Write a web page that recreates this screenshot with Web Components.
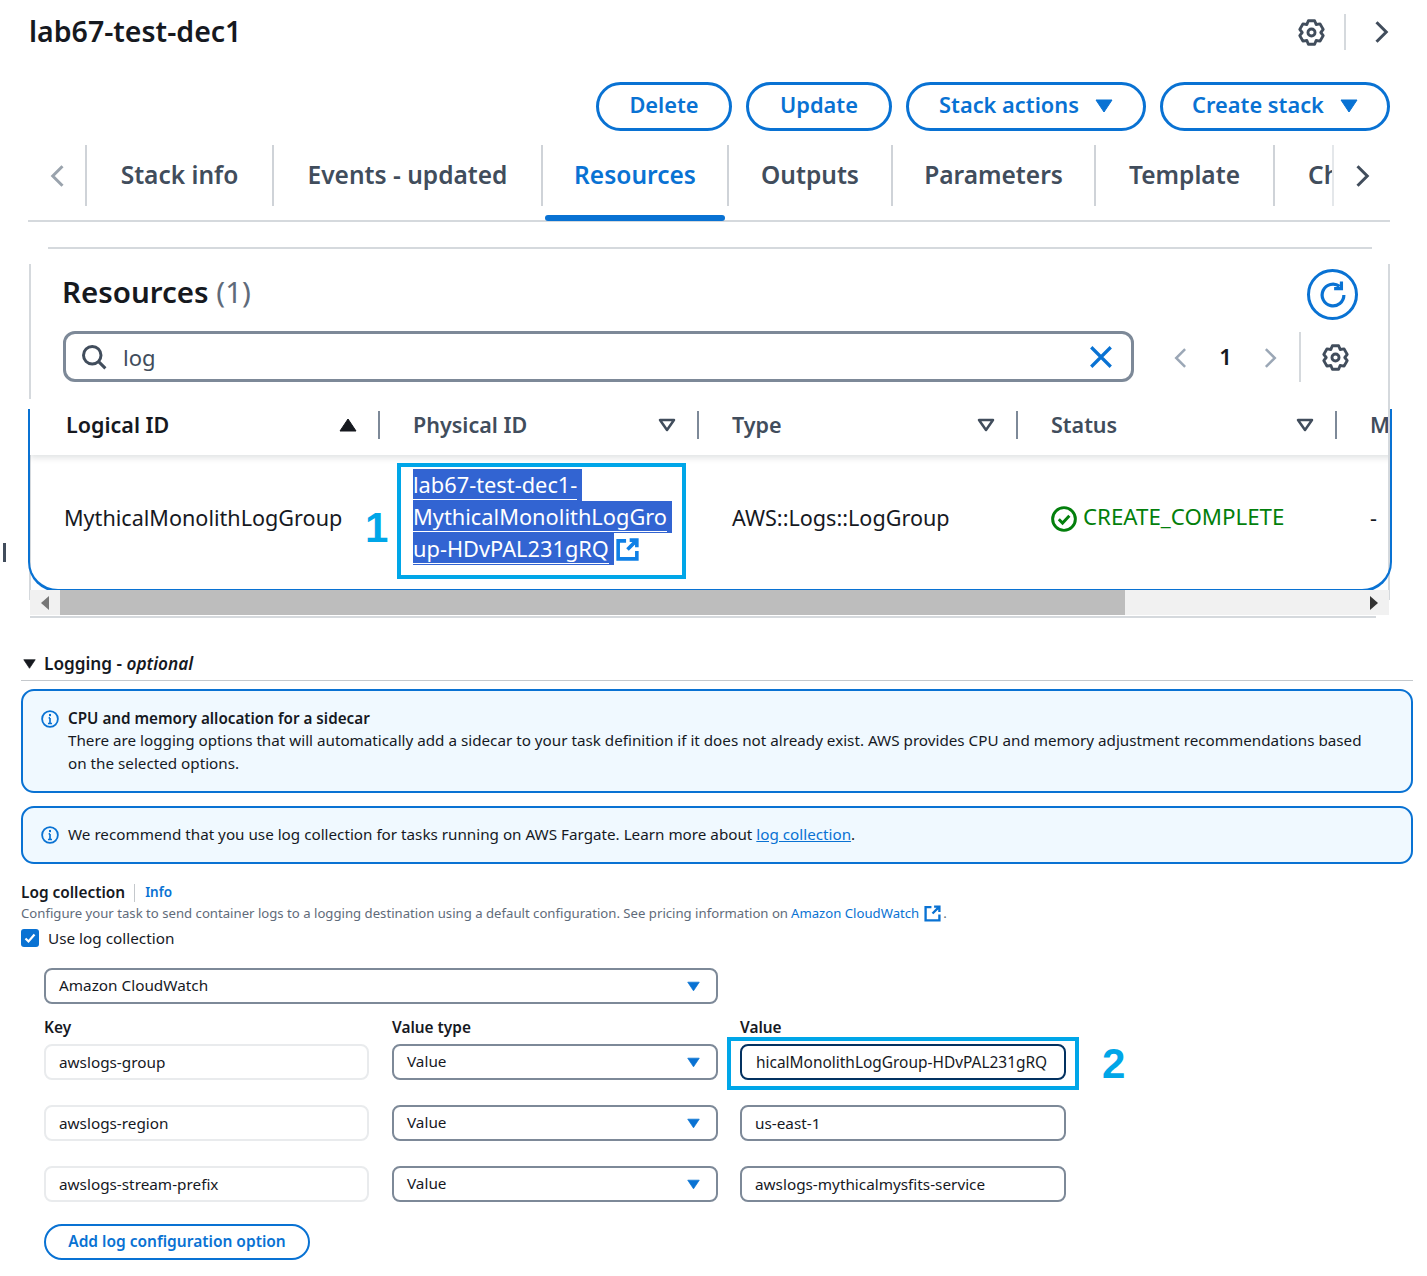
<!DOCTYPE html>
<html><head><meta charset="utf-8"><style>
html,body{margin:0;padding:0;background:#fff;font-family:"Noto Sans","Open Sans",sans-serif;color:#16191f}
</style></head><body>
<aws-page></aws-page>
<script>
function gearPath(){let d='';for(let k=0;k<6;k++){const a=-90+60*k;const pts=[[a-15,7.2],[a+15,7.2],[a+30,5.5]];
 for(const [t,r] of pts){const x=(8+r*Math.cos(t*Math.PI/180)).toFixed(2),y=(8+r*Math.sin(t*Math.PI/180)).toFixed(2);d+=(d?'L':'M')+x+' '+y;}}return d+'z';}
const I={
gear:s=>`<svg width="${s}" height="${s}" viewBox="0 0 16 16" fill="none" stroke="#414d5c" stroke-width="1.7" stroke-linejoin="round"><path d="${gearPath()}"/><circle cx="8" cy="8" r="2.1"/></svg>`,
right:(s,c='#414d5c',w=2)=>`<svg width="${s}" height="${s}" viewBox="0 0 16 16" fill="none" stroke="${c}" stroke-width="${w}"><path d="M5 1.5 11.5 8 5 14.5"/></svg>`,
left:(s,c='#8d99a8',w=2)=>`<svg width="${s}" height="${s}" viewBox="0 0 16 16" fill="none" stroke="${c}" stroke-width="${w}"><path d="M11 1.5 4.5 8 11 14.5"/></svg>`,
caret:(w=18,h=14,c='#0972d3')=>`<svg width="${w}" height="${h}" viewBox="0 0 18 14"><path d="M1 1h16L9 13z" fill="${c}" stroke="${c}" stroke-linejoin="round"/></svg>`,
info:`<svg width="18" height="18" viewBox="0 0 16 16" fill="none" stroke="#0972d3" stroke-width="1.6"><circle cx="8" cy="8" r="7"/><path d="M8 7v5M6.2 12h3.600M6.800 7H8" stroke-width="1.5"/><path d="M8 3.5v2" stroke-width="1.8"/></svg>`,
ext:(s,c,w=2)=>`<svg width="${s}" height="${s}" viewBox="0 0 16 16" fill="none" stroke="${c}" stroke-width="${w}"><path d="M7 2H1.5v12.5h13V9"/><path d="M9.500 1.500h5v5M14 2 8 8"/></svg>`
};
function def(name,css,html){
  customElements.define(name,class extends HTMLElement{
    constructor(){super();const r=this.attachShadow({mode:'open'});
      r.innerHTML=`<style>${css}</style>`+(typeof html==='function'?html(this):html);}
  });
}
def('aws-btn',`:host{display:inline-flex;align-items:center;justify-content:center;box-sizing:border-box;height:var(--h,49px);padding-bottom:var(--pb,3px);border:3px solid #0972d3;border-radius:30px;color:#0972d3;font:600 var(--fs,21.8px)/1 "Noto Sans",sans-serif;white-space:nowrap;gap:16px}svg{display:block;margin-top:2px}`,
  el=>`<slot></slot>${el.hasAttribute('caret')?I.caret():''}`);
def('aws-tab',`:host{display:flex;align-items:center;justify-content:center;box-sizing:border-box;height:61px;font:600 24.5px/1 "Noto Sans",sans-serif;color:#414d5c;border-left:2px solid #cfd3d8;white-space:nowrap;position:relative}
:host([active]){color:#0972d3}
:host([active])::after{content:"";position:absolute;left:2px;right:2px;bottom:-15px;height:6px;border-radius:3px;background:#0972d3}`,`<slot></slot>`);
def('aws-header',`:host{display:flex;align-items:center;justify-content:space-between;height:64px;padding:0 34px 0 29px;box-sizing:border-box}
h1{margin:0 0 2px;font:600 28.5px/1 "Noto Sans",sans-serif;color:#16191f}
.r{display:flex;align-items:center}.s{width:2px;height:36px;background:#d5d9dd;margin:0 23px 0 19px}svg{display:block}`,
`<h1><slot></slot></h1><div class="r">${I.gear(27)}<div class="s"></div>${I.right(24,'#414d5c',2)}</div>`);
def('aws-actions',`:host{display:flex;justify-content:flex-end;gap:14px;padding:18px 37px 0 0;height:63px}`,`<slot></slot>`);
def('aws-tabs',`:host{display:flex;margin:0 37px 0 28px;height:75px;border-bottom:2px solid #d5d9dd;align-items:flex-start;position:relative}
.l{width:57px;height:61px;display:flex;align-items:center;justify-content:center;box-sizing:border-box;padding-left:2px}
.r{position:absolute;right:0;top:0;width:58px;height:61px;background:#fff;border-left:2px solid #e4e7ea;display:flex;align-items:center;justify-content:center;box-sizing:border-box}
svg{display:block}`,
`<div class="l">${I.left(24,'#9aa3ad',2)}</div><slot></slot><div class="r">${I.right(24,'#414d5c',2)}</div>`);
def('aws-search',`:host{display:flex;align-items:center;box-sizing:border-box;width:1071px;height:51px;border:3px solid #7d8998;border-radius:12px;padding:0 17px 0 14px;font:400 22px/1 "Noto Sans",sans-serif;color:#414d5c}
span{flex:1;margin-left:15px}svg{display:block}`,
`<svg width="28" height="28" viewBox="0 0 16 16" fill="none" stroke="#414d5c" stroke-width="1.7"><circle cx="7" cy="7" r="5"/><path d="m10.5 10.5 4 4"/></svg><span><slot></slot></span>
<svg width="26" height="26" viewBox="0 0 16 16" fill="none" stroke="#0972d3" stroke-width="2"><path d="m2 2 12 12M14 2 2 14"/></svg>`);
def('aws-th',`:host{display:flex;align-items:center;box-sizing:border-box;height:100%;font:600 21.5px/1 "Noto Sans",sans-serif;color:#414d5c;padding:0 0 5px var(--pl,33px);position:relative;white-space:nowrap}
:host([sorted]){color:#16191f}
span{flex:1}.a{margin-right:21px;display:flex}.s{width:2.5px;height:28px;background:#7d8998}svg{display:block}`,
el=>`<span><slot></slot></span>${el.hasAttribute('last')?'':`<div class="a">${el.hasAttribute('sorted')?I.caret(18,14,'#16191f').replace('M1 1h16L9 13z','M1 13h16L9 1z'):`<svg width="18" height="14" viewBox="0 0 18 14" fill="none" stroke="#414d5c" stroke-width="2.5" stroke-linejoin="round"><path d="M2 2h14L9 12z"/></svg>`}</div><div class="s"></div>`}`);
def('aws-table-card',`:host{display:block;margin:25px 37px 0 29px;position:relative;height:370px}
.top{margin:0 18px 0 19px;height:2px;background:#d5d9dd}
.body{position:absolute;left:0;right:0;top:17px;height:336px;border:solid #d5d9dd;border-width:0 2px}
.tools{position:absolute;left:0;right:0;top:0;height:135px}
.ttl{position:absolute;left:31px;top:6px;font:600 29.5px/44px "Noto Sans",sans-serif;color:#16191f;white-space:nowrap}
.ttl span{font-weight:400;color:#5f6b7a}
.rf{position:absolute;right:30px;top:5px;width:51px;height:51px;box-sizing:border-box;border:3px solid #0972d3;border-radius:50%;display:flex;align-items:center;justify-content:center}
.row{position:absolute;left:32px;top:67px;right:0;display:flex;align-items:center}
.pg{display:flex;align-items:center;margin-left:36px;font:600 22px/1 "Noto Sans",sans-serif;color:#16191f}
.pg b{font-weight:600;width:67px;text-align:center;margin-bottom:2px}
.pg svg{margin-top:2px}
.dv{width:2px;height:50px;background:#d5d9dd;margin:0 21px 0 18px}
svg{display:block}
.frame{position:absolute;left:-3px;right:-4px;top:145px;height:183px;border:solid #0972d3;border-width:0 2.5px 3px;border-radius:0 0 30px 30px;box-sizing:border-box;pointer-events:none;z-index:3}
.vp{position:absolute;left:-2px;right:0;top:135px;height:191px;overflow:hidden}
.scroll{position:absolute;left:-1px;right:-1px;top:326px;height:25px;background:#f1f1f1;display:flex;z-index:4}
.arr{width:30px;display:flex;align-items:center;justify-content:center}
.th{flex:none;width:1065px;background:#bdbdbd}
.sp{flex:1}
.arr2{width:30px;display:flex;align-items:center;justify-content:center}
.bot{position:absolute;left:-1px;right:12px;top:352px;height:2px;background:#d5d9dd;z-index:4}`,
`<div class="top"></div><div class="body">
<div class="tools"><div class="ttl"><slot name="title"></slot> <span><slot name="count"></slot></span></div>
<div class="rf"><svg width="30" height="30" viewBox="0 0 16 16" fill="none" stroke="#0972d3" stroke-width="1.7"><path d="M13.800 8A5.800 5.800 0 1 1 11.500 3.400"/><path d="M12.500 0.800V4.600H8.600"/></svg></div>
<div class="row"><slot name="search"></slot><div class="pg">${I.left(22,'#9ba7b6',1.8)}<b>1</b>${I.right(22,'#9ba7b6',1.8)}<div class="dv"></div>${I.gear(27)}</div></div></div>
<div class="vp"><slot name="table"></slot></div>
<div class="frame"></div>
<div class="scroll"><div class="arr"><svg width="8" height="14"><path d="M8 0v14L0 7z" fill="#777"/></svg></div><div class="th"></div><div class="sp"></div><div class="arr2"><svg width="8" height="14"><path d="M0 0v14l8-7z" fill="#333"/></svg></div></div>
<div class="bot"></div></div>`);
def('aws-grid',`:host{display:block;width:1500px}
.h{display:grid;grid-template-columns:351px 319px 319px 319px 200px;height:56px;background:#fff;box-shadow:0 4px 6px -1px rgba(0,28,36,.12)}
.b{display:grid;grid-template-columns:351px 319px 319px 319px 200px;height:125px;align-items:center;color:#16191f}`,
`<div class="h"><slot name="head"></slot></div><div class="b"><slot name="cell"></slot></div>`);
def('aws-cell',`:host{display:flex;align-items:center;padding-left:33px;box-sizing:border-box;white-space:nowrap;font:400 21.6px/1 "Noto Sans",sans-serif;position:relative}`,`<slot></slot>`);
def('aws-phys',`:host{display:block;position:relative;height:125px}
.box{position:absolute;left:17px;top:8px;width:289px;height:116px;box-sizing:border-box;border:4px solid #00a6e8}
.t{position:absolute;left:33px;top:14px;font:400 21.8px/32px "Noto Sans",sans-serif;color:#fff;width:270px}
.r{display:flex;align-items:center}
.l{display:block;width:fit-content;background:#3264d2;padding:0 5px 0 0;white-space:nowrap}
.l i{font-style:normal;border-bottom:1.5px solid #fff}
.ic{display:block;margin-left:2px}svg{display:block}
.num{position:absolute;left:-15px;top:52px;font:700 42px/1 "Liberation Sans",sans-serif;color:#00a6e8}`,
`<div class="num">1</div><div class="box"></div><div class="t"><span class="l"><i>lab67-test-dec1-</i></span><span class="l"><i>MythicalMonolithLogGro</i></span><div class="r"><span class="l"><i>up-HDvPAL231gRQ</i></span><span class="ic">${I.ext(23,'#0f80e6',2.5)}</span></div></div>`);
def('aws-status',`:host{display:flex;align-items:center;gap:6px;padding-left:33px;font:400 22.3px/1 "Noto Sans",sans-serif;color:#037f0c;white-space:nowrap}svg{display:block;margin-top:3px}`,
`<svg width="26" height="26" viewBox="0 0 16 16" fill="none" stroke="#037f0c" stroke-width="1.8"><circle cx="8" cy="8" r="7"/><path d="m4.800 8.200 2.300 2.300 4.200-4.500" stroke-width="1.8"/></svg><slot></slot>`);
def('aws-section',`:host{display:flex;align-items:center;gap:8px;margin:0 14px 0 21px;height:32px;border-bottom:1px solid #c4c8cc;font:600 17.2px/1 "Noto Sans",sans-serif;color:#16191f}
svg{display:block;margin-left:2px}`,`${I.caret(13,10,'#16191f')}<span><slot></slot></span>`);
def('aws-alert',`:host{display:flex;align-items:flex-start;box-sizing:border-box;margin:0 14px 0 21px;border:2.5px solid #0972d3;border-radius:13px;background:#f0f9ff;padding:var(--pt,16px) 30px var(--pb,16px) 18px;font:400 15.22px/23px "Noto Sans",sans-serif;color:#16191f}
.i{margin-right:9px;margin-top:2.5px;flex:none}svg{display:block}`,`<div class="i">${I.info}</div><div><slot></slot></div>`);
def('aws-field-head',`:host{display:block;margin:0 14px 0 21px;font:400 13.17px/18px "Noto Sans",sans-serif;color:#5f6b7a}
.t{display:flex;align-items:center;height:21px;font:600 15.4px/1 "Noto Sans",sans-serif;color:#16191f}
.sep{width:1px;height:18px;background:#c4c8cc;margin:0 10px 0 9px}
.info{color:#0972d3;font:600 13.5px/1 "Noto Sans",sans-serif}
.d{white-space:nowrap;display:flex;align-items:center;margin-top:1px}
.d a{color:#0972d3;margin:0 0 0 3px}.d svg{margin:1px 2px 0 5px}
.c{display:flex;align-items:center;gap:9px;margin-top:7px;font:400 15.3px/18px "Noto Sans",sans-serif;color:#16191f}
.cb{width:18px;height:18px;border-radius:3px;background:#0972d3;display:flex;align-items:center;justify-content:center}svg{display:block}`,
`<div class="t"><slot name="label"></slot><span class="sep"></span><span class="info">Info</span></div>
<div class="d"><slot name="desc"></slot><a><slot name="link"></slot></a>${I.ext(17,'#0972d3',2.2)}.</div>
<div class="c"><span class="cb"><svg width="14" height="14" viewBox="0 0 14 14" fill="none" stroke="#fff" stroke-width="2.2"><path d="m2.500 7.500 3 3 6-7"/></svg></span><slot name="check"></slot></div>`);
def('aws-select',`:host{display:flex;align-items:center;justify-content:space-between;box-sizing:border-box;height:36px;border:2px solid #7d8998;border-radius:8px;padding:0 16px 0 13px;font:400 15.3px/1 "Noto Sans",sans-serif;color:#16191f;background:#fff}svg{display:block}`,`<slot></slot>${I.caret(13,11)}`);
def('aws-input',`:host{display:flex;align-items:center;box-sizing:border-box;height:36px;border:2px solid #7d8998;border-radius:8px;padding:1px 14px 0 13px;font:400 15.3px/1 "Noto Sans",sans-serif;color:#16191f;background:#fff;white-space:nowrap}
:host([ro]){border-color:#e9ebed}:host([focus]){border-color:#033160;padding-left:14px;font-size:15.45px}`,`<slot></slot>`);
def('aws-label',`:host{display:block;font:600 15.4px/20px "Noto Sans",sans-serif;color:#16191f}`,`<slot></slot>`);
def('aws-annot',`:host{display:block;position:relative}
.box{position:absolute;left:-13px;top:-7px;width:352px;height:53px;box-sizing:border-box;border:4px solid #00a6e8}
.n{position:absolute;left:362px;top:-1px;font:700 42px/1 "Liberation Sans",sans-serif;color:#00a6e8}`,
`<slot></slot><div class="box"></div><div class="n">2</div>`);
def('aws-kv',`:host{display:grid;grid-template-columns:325.5px 325.5px 326px;column-gap:22.5px;row-gap:25px;margin:0 0 0 44px;width:1022px}
::slotted(aws-label){margin-bottom:-19px}::slotted(aws-input[ro]){width:325px}`,`<slot></slot>`);
def('aws-page',`:host{display:block;width:1427px;height:1276px;overflow:hidden;position:relative}
.cur{position:absolute;left:3px;top:543px;width:3px;height:19px;background:#414d5c}`,`<slot></slot><div class="cur"></div>`);
const p=document.querySelector('aws-page');
p.innerHTML=`
<aws-header>lab67-test-dec1</aws-header>
<aws-actions>
<aws-btn style="width:136px">Delete</aws-btn><aws-btn style="width:146px">Update</aws-btn><aws-btn caret style="width:240px">Stack actions</aws-btn><aws-btn caret style="width:230px">Create stack</aws-btn>
</aws-actions>
<aws-tabs>
<aws-tab style="width:187px">Stack info</aws-tab><aws-tab style="width:269px">Events - updated</aws-tab><aws-tab active style="width:186px">Resources</aws-tab><aws-tab style="width:164px">Outputs</aws-tab><aws-tab style="width:203px">Parameters</aws-tab><aws-tab style="width:179px">Template</aws-tab><aws-tab style="width:60px;justify-content:flex-start;padding-left:33px">Ch</aws-tab>
</aws-tabs>
<aws-table-card>
<span slot="title">Resources</span><span slot="count">(1)</span>
<aws-search slot="search">log</aws-search>
<aws-grid slot="table">
<aws-th slot="head" sorted style="--pl:37px">Logical ID</aws-th><aws-th slot="head">Physical ID</aws-th><aws-th slot="head">Type</aws-th><aws-th slot="head">Status</aws-th><aws-th slot="head" last>M</aws-th>
<aws-cell slot="cell" style="padding-left:35px">MythicalMonolithLogGroup</aws-cell><aws-phys slot="cell"></aws-phys><aws-cell slot="cell">AWS::Logs::LogGroup</aws-cell><aws-status slot="cell">CREATE_COMPLETE</aws-status><aws-cell slot="cell">-</aws-cell>
</aws-grid>
</aws-table-card>
<aws-section style="margin-top:31px">Logging - <i>optional</i></aws-section>
<aws-alert style="margin-top:8px;height:104px"><b style="font-weight:600;display:block;line-height:22px">CPU and memory allocation for a sidecar</b><span style="display:block;line-height:23px">There are logging options that will automatically add a sidecar to your task definition if it does not already exist. AWS provides CPU and memory adjustment recommendations based on the selected options.</span></aws-alert>
<aws-alert style="margin-top:13px;height:58px;--pt:15px"><span>We recommend that you use log collection for tasks running on AWS Fargate. Learn more about <a style="color:#0972d3;text-decoration:underline">log collection</a>.</span></aws-alert>
<aws-field-head style="margin-top:18px"><span slot="label">Log collection</span><span slot="desc">Configure your task to send container logs to a logging destination using a default configuration. See pricing information on</span><span slot="link">Amazon CloudWatch</span><span slot="check">Use log collection</span></aws-field-head>
<aws-select style="margin:21px 0 0 44px;width:674px">Amazon CloudWatch</aws-select>
<div style="height:14px"></div>
<aws-kv>
<aws-label>Key</aws-label><aws-label>Value type</aws-label><aws-label>Value</aws-label>
<aws-input ro>awslogs-group</aws-input><aws-select>Value</aws-select><aws-annot><aws-input focus>hicalMonolithLogGroup-HDvPAL231gRQ</aws-input></aws-annot>
<aws-input ro>awslogs-region</aws-input><aws-select>Value</aws-select><aws-input>us-east-1</aws-input>
<aws-input ro>awslogs-stream-prefix</aws-input><aws-select>Value</aws-select><aws-input>awslogs-mythicalmysfits-service</aws-input>
</aws-kv>
<aws-btn style="--h:36px;--fs:15.5px;--pb:1px;width:266px;margin:22px 0 0 44px;border-width:2px">Add log configuration option</aws-btn>`;
</script>
</body></html>
